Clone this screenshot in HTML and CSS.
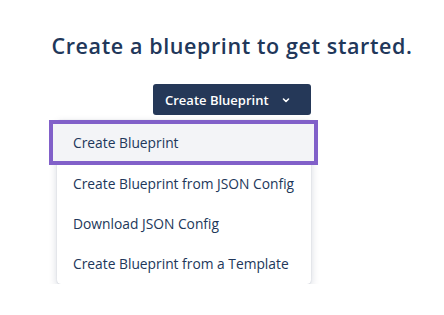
FILE: index.html
```html
<!DOCTYPE html>
<html lang="en">
<head>
    <meta charset="UTF-8">
    <meta name="viewport" content="width=device-width, initial-scale=1.0">
    <title>Blueprints</title>
    <link rel="stylesheet" href="styles.css">
</head>
<body>
    <div class="container">
        <h1>Create a blueprint to get started.</h1>
        <div class="actions">
            <div class="dropdown">
                <button class="main-btn">
                    <span>Create Blueprint</span>
                    <svg class="chevron" width="10" height="10" viewBox="0 0 10 10">
                        <path d="M2.5 4 L5 6.5 L7.5 4" fill="none" stroke="white" stroke-width="1.6" stroke-linecap="round" stroke-linejoin="round"/>
                    </svg>
                </button>
                <div class="menu">
                    <div class="focus-ring">
                        <div class="menu-item active">Create Blueprint</div>
                    </div>
                    <div class="menu-item">Create Blueprint from JSON Config</div>
                    <div class="menu-item">Download JSON Config</div>
                    <div class="menu-item">Create Blueprint from a Template</div>
                </div>
            </div>
        </div>
    </div>
</body>
</html>
```

FILE: styles.css
```css
body {
    margin: 0;
    background-color: white;
    font-family: "Open Sans", "Noto Sans", sans-serif;
    color: #21375a;
}
.container {
    padding: 0 0 0 20px;
}
h1 {
    margin: 0;
    padding-top: 31px;
    font-size: 21.5px;
    font-weight: 600;
    letter-spacing: 0.6px;
    line-height: 30px;
    text-align: center;
    color: #21375a;
}
.actions {
    margin-top: 23px;
    padding-left: 37px;
    display: flex;
}
.dropdown {
    display: flex;
    flex-direction: column;
    align-items: flex-end;
}
.main-btn {
    display: flex;
    align-items: center;
    gap: 12px;
    height: 31px;
    width: 158px;
    padding: 0 0 0 12px;
    background-color: #253858;
    color: white;
    border: none;
    border-radius: 3px;
    font-family: inherit;
    font-size: 13px;
    font-weight: 600;
}
.chevron {
    margin-top: 1px;
}
.menu {
    margin-top: 5px;
    width: 254px;
    padding-top: 4px;
    background-color: white;
    border-radius: 4px;
    box-shadow: 0 3px 8px rgba(9, 30, 66, 0.18), 0 0 1px rgba(9, 30, 66, 0.25);
}
.menu-item {
    height: 40px;
    line-height: 40px;
    padding-left: 16px;
    font-size: 13.8px;
    color: #21375a;
    white-space: nowrap;
}
.focus-ring {
    margin: -4px -7px -1px -8px;
    border: 4px solid #8160c9;
    background-color: #f3f4f7;
}
.focus-ring .menu-item {
    height: 37px;
    line-height: 37px;
    padding-left: 20px;
}
```
